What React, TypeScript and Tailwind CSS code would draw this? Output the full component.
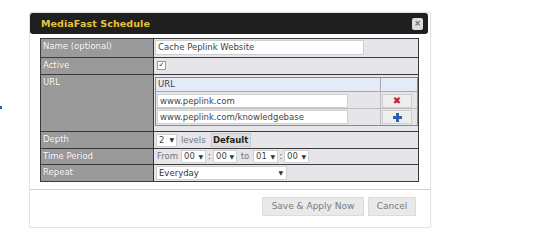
import React from 'react';

const Sel: React.FC<{ value: string; w: string }> = ({ value, w }) => (
  <div className={`${w} h-[13px] bg-white border border-[#cfcfcf] flex items-center justify-between px-[2px] text-[#444]`}>
    <span>{value}</span>
    <span className="text-[6px] text-[#333]">▼</span>
  </div>
);

const Label: React.FC<{ text: string }> = ({ text }) => (
  <div className="bg-[#9a9a9a] border-r border-[#333] text-white pl-[2px] pt-[2px] leading-[11px] [text-shadow:0_0_1px_rgba(0,0,0,0.25)]">
    {text}
  </div>
);

const App: React.FC = () => {
  return (
    <div className="w-[553px] h-[246px] bg-white flex font-['DejaVu_Sans',sans-serif] text-[8.5px] leading-none overflow-hidden">
      {/* page behind the dialog */}
      <div className="w-[29px] flex flex-col pt-[106px]">
        <div className="w-[2px] h-[3px] bg-[#2a64b0]" />
      </div>

      {/* Dialog */}
      <div className="mt-[12px] w-[402px] h-[216px] border border-[#e2e2e2] rounded-[2px] bg-white flex flex-col shadow-[0_0_2px_rgba(0,0,0,0.06)]">
        {/* Header */}
        <div className="mr-[2px] h-[21px] bg-[#1f1f1f] rounded-[3px] flex items-center justify-between pl-[11px] pr-[5px]">
          <span className="text-[#e9c43c] font-bold text-[9.5px] tracking-[0.1px]">MediaFast Schedule</span>
          <div className="w-[11px] h-[12px] bg-[#dcdcdc] rounded-[2px] flex items-center justify-center text-[#666] text-[8px] font-bold">
            ×
          </div>
        </div>

        {/* Form table */}
        <div className="ml-[10px] mt-[4px] w-[379px] border border-[#3a3a3a] grid grid-cols-[113px_1fr]">
          {/* Name */}
          <Label text="Name (optional)" />
          <div className="h-[18px] bg-[#e6e6ea] pl-[1px] pt-[1px]">
            <div className="w-[209px] h-[15px] bg-white border border-[#cfcfcf] flex items-center pl-[2px] text-[#444]">
              Cache Peplink Website
            </div>
          </div>
          <div className="col-span-2 h-px bg-[#3a3a3a]" />

          {/* Active */}
          <Label text="Active" />
          <div className="h-[16px] bg-[#e6e6ea] pl-[3px] pt-[3px]">
            <div className="w-[9px] h-[9px] bg-white border border-[#9a9a9a] flex items-center justify-center text-[7px] text-[#333] leading-none">
              ✓
            </div>
          </div>
          <div className="col-span-2 h-px bg-[#3a3a3a]" />

          {/* URL */}
          <Label text="URL" />
          <div className="h-[56px] bg-[#e6e6ea] pl-[1px] pt-[2px]">
            <div className="w-[263px] border border-[#8a8a8a] grid grid-cols-[225px_1fr]">
              <div className="h-[14px] bg-[#e4ebf7] border-r border-b border-[#a8a8a8] pl-[2px] flex items-center text-[#444]">URL</div>
              <div className="h-[14px] bg-[#e4ebf7] border-b border-[#a8a8a8]" />
              <div className="h-[17px] border-r border-b border-[#bdbdbd] pl-[1px] pt-[2px]">
                <div className="w-[191px] h-[14px] bg-white border border-[#cfcfcf] flex items-center pl-[2px] text-[#444]">www.peplink.com</div>
              </div>
              <div className="h-[17px] border-b border-[#bdbdbd] pl-[1px] pt-[2px]">
                <div className="w-[30px] h-[14px] bg-[#eeeeee] border border-[#cfcfcf] flex items-center justify-center text-[#d21f1f] text-[10px] font-bold">✖</div>
              </div>
              <div className="h-[16px] border-r border-[#bdbdbd] pl-[1px] pt-[1px]">
                <div className="w-[191px] h-[14px] bg-white border border-[#cfcfcf] flex items-center pl-[2px] text-[#444]">www.peplink.com/knowledgebase</div>
              </div>
              <div className="h-[16px] pl-[1px] pt-[1px]">
                <div className="w-[30px] h-[14px] bg-[#eeeeee] border border-[#cfcfcf] flex items-center justify-center">
                  <svg width="9" height="9" viewBox="0 0 9 9">
                    <rect x="3" y="0" width="3" height="9" fill="#2a64b0" />
                    <rect x="0" y="3" width="9" height="3" fill="#2a64b0" />
                  </svg>
                </div>
              </div>
            </div>
          </div>
          <div className="col-span-2 h-px bg-[#3a3a3a]" />

          {/* Depth */}
          <Label text="Depth" />
          <div className="h-[16px] bg-[#e6e6ea] pl-[2px] flex items-center gap-[4px] text-[#777]">
            <Sel value="2" w="w-[21px]" />
            <span>levels</span>
            <div className="ml-[1px] w-[40px] h-[14px] bg-[#dedede] border border-[#cacaca] flex items-center justify-center text-[#222] font-bold">Default</div>
          </div>
          <div className="col-span-2 h-px bg-[#3a3a3a]" />

          {/* Time Period */}
          <Label text="Time Period" />
          <div className="h-[15px] bg-[#e6e6ea] pl-[3px] flex items-center text-[#777]">
            <span className="w-[24px]">From</span>
            <Sel value="00" w="w-[25px]" />
            <span className="w-[7px] text-center text-[#444]">:</span>
            <Sel value="00" w="w-[24px]" />
            <span className="w-[16px] text-center">to</span>
            <Sel value="01" w="w-[25px]" />
            <span className="w-[6px] text-center text-[#444]">:</span>
            <Sel value="00" w="w-[25px]" />
          </div>
          <div className="col-span-2 h-px bg-[#3a3a3a]" />

          {/* Repeat */}
          <Label text="Repeat" />
          <div className="h-[16px] bg-[#e6e6ea] pl-[2px] flex items-center">
            <div className="w-[131px] h-[14px] bg-white border border-[#cfcfcf] flex items-center justify-between pl-[2px] pr-[3px] text-[#333]">
              <span>Everyday</span>
              <span className="text-[6px]">▼</span>
            </div>
          </div>
        </div>

        {/* Footer */}
        <div className="mt-[7px] h-px bg-[#cfcfcf]" />
        <div className="flex justify-end gap-[4px] pt-[7px] pr-[14px]">
          <div className="w-[102px] h-[19px] bg-[#e9e9e9] border border-[#dcdcdc] flex items-center justify-center text-[#7a7a7a] text-[9px]">
            Save &amp; Apply Now
          </div>
          <div className="w-[48px] h-[19px] bg-[#e9e9e9] border border-[#dcdcdc] flex items-center justify-center text-[#7a7a7a] text-[9px]">
            Cancel
          </div>
        </div>
      </div>
    </div>
  );
};

export default App;
